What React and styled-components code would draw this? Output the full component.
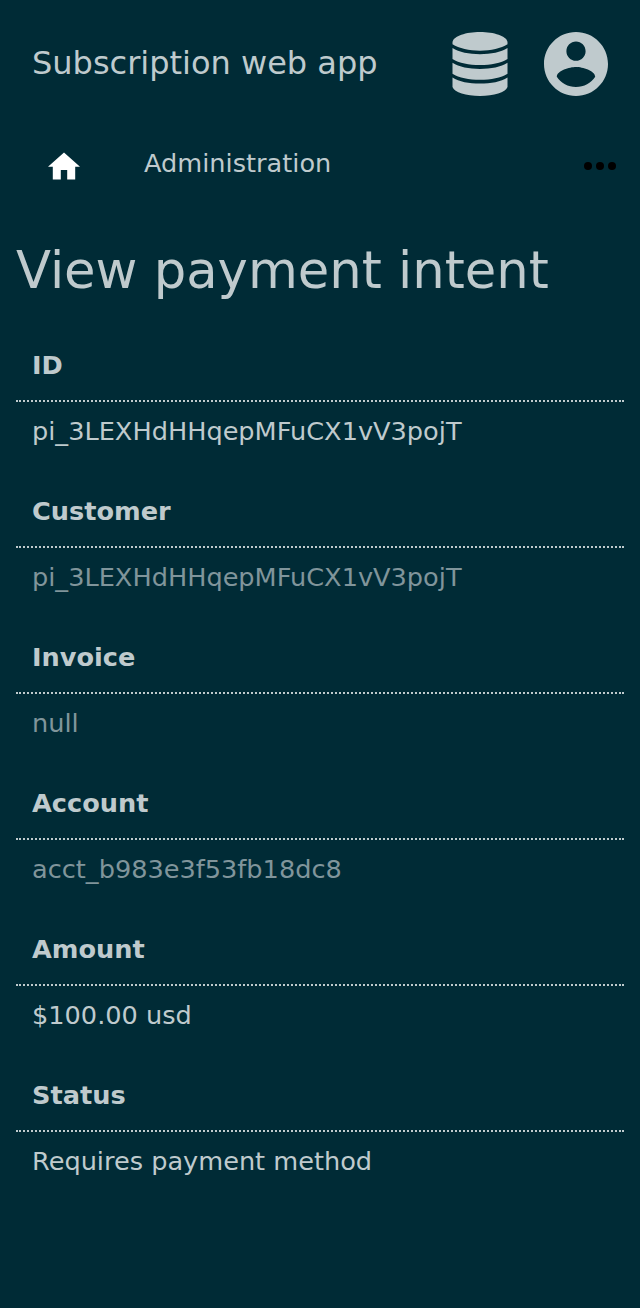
import React from "react";
import styled, { createGlobalStyle } from "styled-components";

const Global = createGlobalStyle`
  * { box-sizing: border-box; }
  body { margin: 0; min-height: 1308px; background: #002b36; color: #bfcacd; font-family: "DejaVu Sans", sans-serif; font-size: 25.6px; }
  svg { display: block; }
`;
const Header = styled.header`
  display: flex; align-items: center; height: 128px; padding: 0 32px; gap: 32px;
`;
const Brand = styled.div`
  flex: 1; font-size: 32px; line-height: 38px; padding-bottom: 2px;
`;
const Nav = styled.nav`
  display: flex; align-items: center; height: 76px; padding: 0 24px 0 48px;
`;
const NavLink = styled.a`
  flex: 1; margin-left: 64px; line-height: 30px; padding-bottom: 6px;
`;
const Title = styled.h1`
  margin: 35px 16px 0; font-weight: 400; font-size: 51.2px; line-height: 62px; white-space: nowrap;
`;
const Details = styled.dl`
  margin: 29px 16px 0;
`;
const Term = styled.dt`
  height: 72px; padding: 20px 16px 0; font-weight: 700; line-height: 30px; border-bottom: 2px dotted #bfcacd;
`;
const Value = styled.dd`
  height: 74px; margin: 0; padding: 14px 16px 0; line-height: 30px; color: ${(p) => (p.$muted ? "#80959b" : "#bfcacd")};
`;

const fields = [
  ["ID", "pi_3LEXHdHHqepMFuCX1vV3pojT", false],
  ["Customer", "pi_3LEXHdHHqepMFuCX1vV3pojT", true],
  ["Invoice", "null", true],
  ["Account", "acct_b983e3f53fb18dc8", true],
  ["Amount", "$100.00 usd", false],
  ["Status", "Requires payment method", false],
];

export default function App() {
  return (
    <>
      <Global />
      <Header>
        <Brand>Subscription web app</Brand>
        <svg width="64" height="64" viewBox="0 0 64 64" fill="#bfcacd">
          <path d="M4.500 10C5.500 4 18 0 32 0s26.500 4 27.500 10v2.300C53 16.500 43 18.700 32 18.700S11 16.500 4.500 12.300z" />
          <path d="M4.500 16.100C11 20.300 21 22.300 32 22.300S53 20.300 59.500 16.100v10.900C53 31.200 43 33.100 32 33.100S11 31.200 4.500 27z" />
          <path d="M4.500 30.800C11 35 21 36.900 32 36.900S53 35 59.500 30.800v10.900C53 45.900 43 47.800 32 47.800S11 45.900 4.500 41.700z" />
          <path d="M4.500 45.400C11 49.600 21 51.500 32 51.500S53 49.600 59.500 45.400V55C57.500 60.500 46 64 32 64S6.500 60.500 4.500 55z" />
        </svg>
        <svg width="64" height="64" viewBox="2 2 20 20" fill="#bfcacd">
          <path d="M12 2C6.480 2 2 6.480 2 12s4.480 10 10 10 10-4.480 10-10S17.520 2 12 2zm0 3c1.660 0 3 1.340 3 3s-1.340 3-3 3-3-1.340-3-3 1.340-3 3-3zm0 14.200c-2.500 0-4.710-1.280-6-3.220.03-1.990 4-3.080 6-3.080 1.990 0 5.970 1.090 6 3.080-1.290 1.940-3.500 3.220-6 3.220z" />
        </svg>
      </Header>
      <Nav>
        <svg width="32" height="32" viewBox="2 1.500 20 20" fill="#fff">
          <path d="M10 20v-6h4v6h5v-8h3L12 3 2 12h3v8z" />
        </svg>
        <NavLink>Administration</NavLink>
        <svg width="32" height="8" viewBox="0 0 32 8" fill="#000">
          <circle cx="4" cy="4" r="4" /><circle cx="16" cy="4" r="4" /><circle cx="28" cy="4" r="4" />
        </svg>
      </Nav>
      <Title>View payment intent</Title>
      <Details>
        {fields.map(([name, value, muted]) => (
          <React.Fragment key={name}>
            <Term>{name}</Term>
            <Value $muted={muted}>{value}</Value>
          </React.Fragment>
        ))}
      </Details>
    </>
  );
}
